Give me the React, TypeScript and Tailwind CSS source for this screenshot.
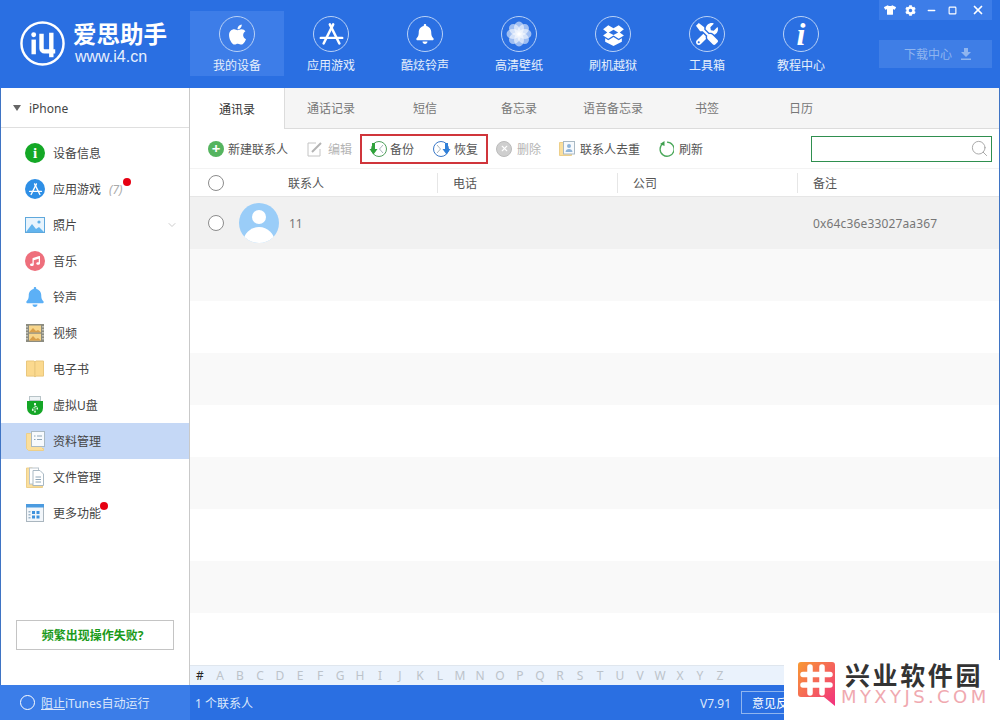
import * as React from "react";
import { FaApple, FaBell, FaCog, FaMusic, FaTools, FaTshirt, FaUsb } from "react-icons/fa";
import { ChevronDown, Minus, Search, Square, X } from "lucide-react";

const FONT = "[font-family:'Noto_Sans','Noto_Sans_CJK_SC',sans-serif]";

function AppStoreGlyph({ className }: { className?: string }) {
  return (
    <svg viewBox="0 0 24 24" className={className} fill="none" stroke="currentColor" strokeWidth="2.2" strokeLinecap="round">
      <path d="M10.5 3 19 20" />
      <path d="M13.5 3 5 20" />
      <path d="M2.5 15h19" />
    </svg>
  );
}

function FlowerGlyph() {
  const angles = [0, 45, 90, 135, 180, 225, 270, 315];
  return (
    <svg viewBox="0 0 24 24" className="w-[26px] h-[26px]">
      {angles.map((a) => (
        <ellipse key={a} cx="12" cy="6.5" rx="4.6" ry="6" fill="#fff" opacity="0.55" transform={`rotate(${a} 12 12)`} />
      ))}
      <circle cx="12" cy="12" r="1.4" fill="#fff" />
    </svg>
  );
}

function BoxGlyph() {
  return (
    <svg viewBox="0 0 24 24" className="w-[25px] h-[25px]">
      <path d="M2 7l5-4 5 3 5-3 5 4-4 3 4 3-5 3-5-3-5 3-5-3 4-3z" fill="#fff" />
      <path d="M12 7.5l4.5 2.5-4.5 2.5L7.5 10z" fill="#2a6fe2" />
      <path d="M4 15.5l3 2 5-3 5 3 3-2V19l-8 4-8-4z" fill="#fff" />
    </svg>
  );
}

const NAV = [
  { label: "我的设备", icon: <FaApple className="w-[23px] h-[23px]" />, active: true },
  { label: "应用游戏", icon: <AppStoreGlyph className="w-[27px] h-[27px]" /> },
  { label: "酷炫铃声", icon: <FaBell className="w-[20px] h-[20px]" /> },
  { label: "高清壁纸", icon: <FlowerGlyph /> },
  { label: "刷机越狱", icon: <BoxGlyph /> },
  { label: "工具箱", icon: <FaTools className="w-[22px] h-[22px]" /> },
  {
    label: "教程中心",
    icon: <span className="text-[32px] leading-none font-bold italic [font-family:'Liberation_Serif',serif]">i</span>,
  },
];

const TABS = ["通讯录", "通话记录", "短信", "备忘录", "语音备忘录", "书签", "日历"];

function PhotoIcon() {
  return (
    <svg viewBox="0 0 20 16" className="w-[20px] h-[16px]">
      <rect x="0.5" y="0.5" width="19" height="15" fill="#e8f4fd" stroke="#5fa8dc" />
      <circle cx="14" cy="5" r="1.6" fill="#5fb0e8" />
      <path d="M1 15 7 7l4 5 3-2 5 5z" fill="#62b4ee" />
    </svg>
  );
}

function FilmIcon() {
  return (
    <svg viewBox="0 0 18 18" className="w-[18px] h-[18px]">
      <rect width="18" height="18" fill="#8c8c80" />
      <rect x="3" y="1.5" width="12" height="6.8" fill="#f7d68c" />
      <rect x="3" y="9.7" width="12" height="6.8" fill="#f7d68c" />
      <path d="M3 8.3 7 4l3 3 2-1 3 2.3zM3 16.5 7 12l3 3 2-1 3 2.5z" fill="#d9a04a" />
      <path d="M1 2v14M17 2v14" stroke="#e4e4dc" strokeWidth="1.2" strokeDasharray="1.5 1.5" />
    </svg>
  );
}

function BookIcon() {
  return (
    <svg viewBox="0 0 18 18" className="w-[18px] h-[18px]">
      <path d="M0.5 1h7.6l.9 1v15l-1-.9H.5z" fill="#fbd98e" stroke="#e9c77d" />
      <path d="M17.5 1H9.9L9 2v15l1-.9h7.5z" fill="#fbd98e" stroke="#e9c77d" />
    </svg>
  );
}

function UsbIcon() {
  return (
    <div className="flex flex-col items-center">
      <div className="w-[12px] h-[5px] border border-[#b8c4c8] bg-[#eef3f5]" />
      <div className="w-[16px] h-[14px] rounded-b-[7px] bg-[#14a626] flex items-center justify-center text-white">
        <FaUsb className="w-[10px] h-[10px] rotate-90" />
      </div>
    </div>
  );
}

function ContactsIcon() {
  return (
    <svg viewBox="0 0 19 20" className="w-[19px] h-[20px]">
      <path d="M.5 2.5h4v15h13v2H2.5l-2-2z" fill="#fbdf9d" stroke="#edcf8a" />
      <rect x="1" y="3" width="15" height="15" fill="#fbdf9d" />
      <rect x="5.5" y=".5" width="13" height="15" fill="#f7fafd" stroke="#a9b9c4" />
      <path d="M8 5h1.5M11 5h5M8 8.5h1.5M11 8.5h5" stroke="#8fa6b8" strokeWidth="1.1" />
    </svg>
  );
}

function FilesIcon() {
  return (
    <svg viewBox="0 0 18 21" className="w-[18px] h-[21px]">
      <path d="M.5 1h6v18h10v1.5H.5z" fill="#fbdf9d" stroke="#edcf8a" />
      <rect x="3.5" y="1" width="9" height="16" fill="#fff" stroke="#b9c4cc" />
      <path d="M7 3.5h7l3.5 3.5v11.5H7z" fill="#fff" stroke="#a9b9c4" />
      <path d="M9.5 10H15M9.5 12.5H15M9.5 15H15" stroke="#8fa6b8" />
    </svg>
  );
}

function MoreIcon() {
  return (
    <svg viewBox="0 0 18 18" className="w-[18px] h-[18px]">
      <rect x=".5" y=".5" width="17" height="17" fill="#f2f6fa" stroke="#aab6bf" />
      <rect x="0" y="0" width="18" height="3.5" fill="#4b9be0" />
      <path d="M6 7h3v3H6zM10.5 7h3v3h-3zM10.5 11.5h3v3h-3zM6 11.5h3v3H6z" fill="#3f92dc" />
      <path d="M2.5 7h2v1.5h-2zM2.5 10h2v1.5h-2zM2.5 13h2v1.5h-2z" fill="#9db4c6" />
    </svg>
  );
}

type SideItem = {
  label: string;
  icon: React.ReactNode;
  count?: string;
  dot?: string;
  chevron?: boolean;
  active?: boolean;
};

const SIDE: SideItem[] = [
  {
    label: "设备信息",
    icon: (
      <span className="w-[20px] h-[20px] rounded-full bg-[#14a826] text-white flex items-center justify-center text-[15px] font-bold leading-none [font-family:'Liberation_Serif',serif]">
        i
      </span>
    ),
  },
  {
    label: "应用游戏",
    count: "(7)",
    dot: "left-[122px]",
    icon: (
      <span className="w-[20px] h-[20px] rounded-full bg-[#2e8fe6] text-white flex items-center justify-center">
        <AppStoreGlyph className="w-[15px] h-[15px]" />
      </span>
    ),
  },
  { label: "照片", chevron: true, icon: <PhotoIcon /> },
  {
    label: "音乐",
    icon: (
      <span className="w-[20px] h-[20px] rounded-full bg-[#ee6f7c] text-white flex items-center justify-center">
        <FaMusic className="w-[10px] h-[10px]" />
      </span>
    ),
  },
  { label: "铃声", icon: <FaBell className="w-[20px] h-[20px] text-[#5cb0f6]" /> },
  { label: "视频", icon: <FilmIcon /> },
  { label: "电子书", icon: <BookIcon /> },
  { label: "虚拟U盘", icon: <UsbIcon /> },
  { label: "资料管理", icon: <ContactsIcon />, active: true },
  { label: "文件管理", icon: <FilesIcon /> },
  { label: "更多功能", dot: "left-[99px]", icon: <MoreIcon /> },
];

function Radio({ className = "" }: { className?: string }) {
  return <span className={"block w-[16px] h-[16px] rounded-full border border-[#8c8c8c] bg-white shrink-0 " + className} />;
}

function BackupIcon({ flip }: { flip?: boolean }) {
  const color = flip ? "#3a78c8" : "#4f9f5c";
  const arrow = flip ? "#2f7fd8" : "#2fa33a";
  return (
    <svg viewBox="0 0 18 18" className={"w-[18px] h-[18px] shrink-0 " + (flip ? "-scale-x-100" : "")}>
      <circle cx="10" cy="9" r="7.5" fill="#fff" stroke={color} strokeWidth="1" />
      <path d="M14 5 10.5 9l3.5 4" fill="none" stroke="#a8b4bc" strokeWidth="1" />
      <path d="M3 3h3v6h2.5l-4 5.500-4-5.500H3z" fill={arrow} />
    </svg>
  );
}

function ToolButton({ icon, label, disabled, className = "", gap = "gap-[5px]", iconWidth = "w-[16px]" }: { icon: React.ReactNode; label: string; disabled?: boolean; className?: string; gap?: string; iconWidth?: string }) {
  return (
    <div className={"flex items-center " + gap + " " + className}>
      <span className={"h-[18px] flex items-center justify-center shrink-0 " + iconWidth}>{icon}</span>
      <span className={"pt-[2px] " + (disabled ? "text-[#b4b4b4]" : "text-[#555]")}>{label}</span>
    </div>
  );
}

function Watermark() {
  return (
    <div className="absolute right-0 bottom-0 w-[216px] h-[60px] bg-white flex items-start pl-[14px] pt-[2px] gap-[10px]">
      <svg viewBox="0 0 37 44" className="w-[37px] h-[44px] shrink-0">
        <defs>
          <linearGradient id="wm" x1="0" y1="0" x2="1" y2="1">
            <stop offset="0" stopColor="#f89a33" />
            <stop offset="1" stopColor="#f2307f" />
          </linearGradient>
        </defs>
        <path d="M3 0h31a3 3 0 0 1 3 3v41l-11-9H3a3 3 0 0 1-3-3V3a3 3 0 0 1 3-3z" fill="url(#wm)" />
        <path d="M12 5v26M24 5v26M5 12.5h27M5 23h27" stroke="#fff" strokeWidth="5.5" strokeLinecap="round" />
      </svg>
      <div className="flex flex-col">
        <span className="text-[25px] leading-[24px] font-bold text-[#333] tracking-[2.6px] whitespace-nowrap [font-family:'Noto_Sans_CJK_SC',sans-serif]">兴业软件园</span>
        <span className="mt-[1px] -ml-[4px] text-[18px] leading-[20px] text-[#f0a9b0] tracking-[3.4px] whitespace-nowrap [font-family:'DejaVu_Sans',sans-serif]">MYXYJS.COM</span>
      </div>
    </div>
  );
}

export default function App() {
  return (
    <div className={"relative w-[1000px] h-[720px] overflow-hidden flex flex-col bg-white text-[12px] " + FONT}>
      <header className="h-[88px] bg-[#2a6fe2] flex shrink-0 text-white">
        <div className="w-[190px] flex items-start pl-[19px] pt-[20px] gap-[7px]">
          <svg viewBox="0 0 48 48" className="w-[47px] h-[47px] shrink-0" fill="none" stroke="#fff">
            <circle cx="24" cy="24" r="21.5" strokeWidth="2.5" />
            <path d="M15 20v15" strokeWidth="4.5" />
            <circle cx="15" cy="15" r="2.5" fill="#fff" stroke="none" />
            <path d="M23 14v15a3 3 0 0 0 3 3h11" strokeWidth="4.5" />
            <path d="M33 13v25" strokeWidth="4.5" />
          </svg>
          <div className="flex flex-col">
            <span className="text-[23.5px] leading-[26px] font-bold whitespace-nowrap [font-family:'Noto_Sans_CJK_SC',sans-serif]">爱思助手</span>
            <span className="mt-[2px] text-[16px] leading-[18px] pl-[2px] [font-family:'Liberation_Sans',sans-serif] text-[#e8f0fd]">www.i4.cn</span>
          </div>
        </div>

        <nav className="flex">
          {NAV.map((item) => (
            <div key={item.label} className={"w-[94px] h-[65px] mt-[11px] flex flex-col items-center " + (item.active ? "bg-[#3d7de8]" : "")}>
              <span className="mt-[5px] w-[36px] h-[36px] rounded-full border border-[#b9d1f6] flex items-center justify-center">{item.icon}</span>
              <span className="mt-[6px] leading-[16px] text-[#e6effc]">{item.label}</span>
            </div>
          ))}
        </nav>

        <div className="ml-[31px] w-[113px] flex flex-col">
          <div className="h-[20px] bg-[#3d7de8] flex items-center text-white">
            <span className="w-[21px] flex justify-center"><FaTshirt className="w-[12px] h-[12px]" /></span>
            <span className="w-[21px] flex justify-center"><FaCog className="w-[11px] h-[11px]" /></span>
            <span className="w-[21px] flex justify-center"><Minus className="w-[11px] h-[11px]" strokeWidth={3} /></span>
            <span className="w-[21px] flex justify-center"><Square className="w-[9px] h-[9px]" strokeWidth={3} /></span>
            <span className="w-[29px] flex justify-center"><X className="w-[14px] h-[14px]" strokeWidth={3} /></span>
          </div>
          <div className="mt-[20px] h-[28px] bg-[#3f7ee6] flex items-center pl-[25px] gap-[8px] text-[#8fb5ef]">
            <span className="pt-[2px]">下载中心</span>
            <svg viewBox="0 0 12 12" className="w-[12px] h-[12px]" fill="currentColor">
              <path d="M4 0h4v4h3L6 9 1 4h3zM1 10.5h10V12H1z" />
            </svg>
          </div>
        </div>
      </header>

      <div className="flex-1 flex min-h-0 border-l border-r border-[#3f74c4]">
        <aside className="w-[189px] shrink-0 flex flex-col border-r border-[#c9c9c9]">
          <div className="h-[40px] flex items-center pl-[12px] gap-[8px] border-b border-[#dfdfdf] text-[#444]">
            <span className="w-0 h-0 border-x-[4px] border-x-transparent border-t-[6px] border-t-[#666]" />
            <span className="pt-[2px]">iPhone</span>
          </div>
          <div className="mt-[7px] flex flex-col">
            {SIDE.map((item) => (
              <div key={item.label} className={"relative h-[36px] flex items-center " + (item.active ? "bg-[#c5d8f6]" : "")}>
                <span className="w-[52px] pl-[24px] pr-[8px] flex justify-center shrink-0">{item.icon}</span>
                <span className="pt-[2px] text-[#444] whitespace-nowrap">{item.label}</span>
                {item.count && <span className="pt-[2px] ml-[8px] text-[#aaa] italic">{item.count}</span>}
                {item.dot && <span className={"absolute top-[7px] w-[8px] h-[8px] rounded-full bg-[#e60012] " + item.dot} />}
                {item.chevron && <ChevronDown className="ml-auto mr-[11px] w-[12px] h-[12px] text-[#ccc]" />}
              </div>
            ))}
          </div>
          <div className="mt-auto mx-[15px] mb-[35px] h-[30px] pt-[2px] pr-[5px] border border-[#c4c4c4] flex items-center justify-center font-bold text-[#1a9a1a]">
            频繁出现操作失败?
          </div>
        </aside>

        <main className="flex-1 min-w-0 flex flex-col">
          <div className="h-[41px] bg-[#f5f5f5] flex border-b border-[#dcdcdc] shrink-0">
            {TABS.map((t, i) => (
              <div key={t} className={"flex items-center justify-center pt-[2px] " + (i === 0 ? "w-[95px] -mr-px h-[41px] bg-white text-[#333] border-r border-[#dcdcdc]" : "w-[94px] text-[#777]")}>
                {t}
              </div>
            ))}
          </div>

          <div className="h-[40px] flex items-center pl-[18px] pr-[7px] shrink-0 border-b border-[#f3f3f3]">
            <ToolButton
              gap="gap-[4px]"
              label="新建联系人"
              icon={<span className="w-[16px] h-[16px] rounded-full bg-[#55b45f] text-white flex items-center justify-center font-bold text-[15px] leading-none">+</span>}
            />
            <ToolButton
              disabled
              className="ml-[19px]"
              label="编辑"
              icon={
                <svg viewBox="0 0 16 16" className="w-[16px] h-[16px]" fill="none">
                  <path d="M13 8v7H1V2h8" stroke="#c4c4c4" />
                  <path d="M5 11 14 2" stroke="#b4b4b4" strokeWidth="2" />
                </svg>
              }
            />
            <div className="ml-[8px] w-[128px] h-[30px] border-2 border-[#d0353b] flex items-center pl-[7px]">
              <ToolButton gap="gap-[3px]" iconWidth="w-[18px]" label="备份" icon={<BackupIcon />} />
              <ToolButton gap="gap-[3px]" iconWidth="w-[18px]" className="ml-[19px]" label="恢复" icon={<BackupIcon flip />} />
            </div>
            <ToolButton
              disabled
              className="ml-[8px]"
              label="删除"
              icon={
                <span className="w-[16px] h-[16px] rounded-full bg-[#cfcfcf] border border-[#bbb] text-white flex items-center justify-center">
                  <X className="w-[9px] h-[9px]" strokeWidth={3} />
                </span>
              }
            />
            <ToolButton
              className="ml-[18px]"
              label="联系人去重"
              icon={
                <svg viewBox="0 0 16 16" className="w-[16px] h-[16px]">
                  <path d="M.5 1.5h4v11h8v2H.5z" fill="#fbdf9d" stroke="#edcf8a" />
                  <rect x="4.5" y=".5" width="11" height="12.5" fill="#f7fafd" stroke="#a9b9c4" />
                  <circle cx="10" cy="5" r="2" fill="#8fb4d8" />
                  <path d="M6.5 11c0-4 7-4 7 0z" fill="#8fb4d8" />
                </svg>
              }
            />
            <ToolButton
              className="ml-[18px]"
              label="刷新"
              icon={
                <svg viewBox="0 0 16 16" className="w-[16px] h-[16px]" fill="none">
                  <path d="M5 2.5a7 7 0 1 0 4-1.3" stroke="#4aa85a" strokeWidth="1.3" />
                  <path d="M2 3 6.5 0v5z" fill="#3f9f4f" />
                </svg>
              }
            />
            <div className="ml-auto w-[181px] h-[26px] border border-[#2f8f4f] flex items-center justify-end pr-[2px]">
              <Search className="w-[19px] h-[19px] text-[#a5a5a5]" strokeWidth={1.2} />
            </div>
          </div>

          <div className="h-[28px] flex items-center border-b border-[#e6e6e6] shrink-0 text-[#555]">
            <Radio className="ml-[18px]" />
            <span className="ml-[64px] w-[149px] pt-[2px]">联系人</span>
            <span className="w-[180px] border-l border-[#e6e6e6] pl-[15px] pt-[2px]">电话</span>
            <span className="w-[180px] border-l border-[#e6e6e6] pl-[15px] pt-[2px]">公司</span>
            <span className="border-l border-[#e6e6e6] pl-[15px] pt-[2px]">备注</span>
          </div>

          <div className="flex-1 min-h-0 flex flex-col overflow-hidden">
            <div className="h-[52px] shrink-0 bg-[#f1f1f1] flex items-center text-[#777]">
              <Radio className="ml-[18px]" />
              <div className="ml-[15px] w-[40px] h-[40px] rounded-full bg-[#9acdf8] overflow-hidden flex flex-col items-center shrink-0">
                <span className="mt-[7px] w-[14px] h-[14px] rounded-full bg-white shrink-0" />
                <span className="mt-[3px] w-[32px] h-[24px] rounded-t-full bg-white shrink-0" />
              </div>
              <span className="ml-[10px] w-[524px] pt-[2px]">11</span>
              <span className="pt-[2px] tracking-[0.15px]">0x64c36e33027aa367</span>
            </div>
            {[0, 1, 2, 3, 4, 5, 6, 7].map((n) => (
              <div key={n} className={"h-[52px] shrink-0 " + (n % 2 === 0 ? "bg-[#f9f9f9]" : "bg-white")} />
            ))}
          </div>

          <div className="h-[20px] shrink-0 bg-[#eaf2fc] border-t border-[#dfe6ee] flex items-center text-[#bcc3ca]">
            {"#ABCDEFGHIJKLMNOPQRSTUVWXYZ".split("").map((c, i) => (
              <span key={c} className={"w-[20px] text-center " + (i === 0 ? "text-[#222]" : "")}>{c}</span>
            ))}
          </div>
        </main>
      </div>

      <footer className="h-[35px] bg-[#2a6fe2] flex items-center shrink-0 text-[#dce8fb]">
        <div className="w-[190px] h-full bg-[#3b7de8] flex items-center pl-[20px] gap-[6px]">
          <span className="w-[15px] h-[15px] rounded-full border border-white" />
          <span className="pt-[2px]"><span className="underline">阻止</span>iTunes自动运行</span>
        </div>
        <span className="ml-[5px] pt-[2px]">1 个联系人</span>
        <span className="ml-auto pt-[2px]">V7.91</span>
        <span className="ml-[10px] mr-[189px] w-[70px] h-[23px] pt-[2px] border border-[#8fb5ef] flex items-center justify-center text-white whitespace-nowrap">意见反馈</span>
      </footer>

      <Watermark />
    </div>
  );
}
